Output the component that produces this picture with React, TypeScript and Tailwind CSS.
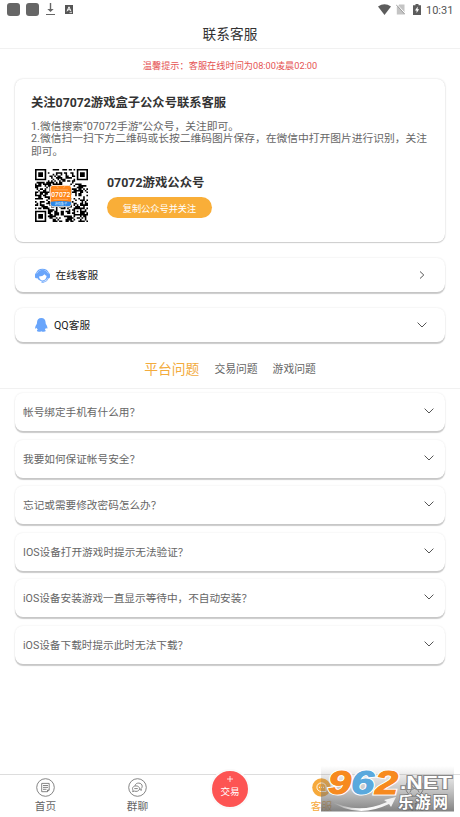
import { useState } from 'react';

const FINDERS = [[0, 0], [26, 0], [0, 26]];

// 33 x 33 module code, with the three corner marks and one alignment mark
const buildCode = () => {
	let seed = 7072;
	let d = "";
	const ring = (x: number, y: number, cx: number, cy: number) =>
		Math.max(Math.abs(x - cx), Math.abs(y - cy));
	for (let y = 0; y < 33; y++) {
		for (let x = 0; x < 33; x++) {
			seed = (seed * 1103515245 + 12345) % 2147483648;
			let dark = ((seed >> 12) & 7) < 4;
			for (const [fx, fy] of FINDERS) {
				const r = ring(x, y, fx + 3, fy + 3);
				if (r <= 4) dark = r === 3 || r <= 1;
			}
			const a = ring(x, y, 26, 26);
			if (a <= 2) dark = a !== 1;
			if (dark) d += `M${x} ${y}h1v1h-1z`;
		}
	}
	return d;
};

const QrCode = () => (
	<svg className="w-[53px] h-[53px]" viewBox="0 0 33 33">
		<path d={buildCode()} fill="#000" />
		<rect x="9.3" y="10" width="13.6" height="13.6" rx="2" fill="#fff" />
		<rect x="9.7" y="10.4" width="12.8" height="12.8" rx="1.8" fill="#ff8619" />
		<path d="M9.7 20.4Q16 19.4 22.5 20.4V21.4a1.8 1.8 0 0 1-1.8 1.8H11.5a1.8 1.8 0 0 1-1.8-1.8z" fill="#2b86e8" />
		<path d="M11.5 13h9M11.5 18.9h9M13.5 10.6l1 1.3M18.7 10.6l-1 1.3" stroke="#ffc48a" strokeWidth=".4" />
		<text x="16.1" y="17.7" fontSize="4.2" textAnchor="middle" fill="#fff" fontWeight="500">07072</text>
		<text x="16.1" y="22.6" fontSize="1.9" textAnchor="middle" fill="#d8ebff">游戏盒子</text>
	</svg>
);

const ChevronDown = () => (
	<svg className="w-[10px] h-[6px]" viewBox="0 0 10 6" fill="none" stroke="#555" strokeWidth="1">
		<path d="M.6 .6L5 5L9.4 .6" />
	</svg>
);

const StatusBar = () => (
	<div className="flex h-[18px] items-center justify-between pl-[7px] pr-[7px]">
		<div className="flex items-center">
			<span className="w-[13px] h-[13px] rounded-[3px] bg-[#666]" />
			<span className="w-[13px] h-[13px] rounded-[3px] bg-[#666] ml-[6px]" />
			<svg className="w-[9px] h-[12px] ml-[7px]" viewBox="0 0 9 12" fill="#666">
				<path d="M3.800 0h1.400v6h2.500L4.500 9 1.300 6h2.500zM0 11h9V12H0z" />
			</svg>
			<svg className="w-[8px] h-[9px] ml-[10px]" viewBox="0 0 8 9">
				<rect width="8" height="9" fill="#555" />
				<path d="M2 6.3L4 1.8L6 6.3M2.8 4.8h2.4" stroke="#fff" strokeWidth="1" fill="none" />
				<path d="M4.5 7.6h2.5" stroke="#fff" strokeWidth=".7" />
			</svg>
		</div>
		<div className="flex items-center">
			<svg className="w-[13px] h-[11px]" viewBox="0 0 13 11" fill="#5c5c5c">
				<path d="M0 2.6Q6.5-2.2 13 2.6L6.5 11z" />
			</svg>
			<svg className="w-[9px] h-[11px] ml-[5px]" viewBox="0 0 9 11">
				<path d="M3.2 .5H8.5V10.5H.8V3z" fill="#c4c4c4" />
				<path d="M.8 .2L9 9.200" stroke="#fff" strokeWidth="1" />
				<path d="M0 .6L9 10.4" stroke="#999" strokeWidth=".9" />
			</svg>
			<svg className="w-[8px] h-[11px] ml-[8px]" viewBox="0 0 8 11">
				<path d="M2.5 0h3v1.2H8V11H0V1.2h2.5z" fill="#5c5c5c" />
				<path d="M4.7 2.5L2 6.4h1.6v2.7L6.1 5.3H4.6z" fill="#fff" />
			</svg>
			<span className="ml-[5px] mt-[2px] w-[27px] text-[11px] leading-none text-[#555] whitespace-nowrap">10:31</span>
		</div>
	</div>
);

const OnlineIcon = () => (
	<svg className="w-[15px] h-[15px]" viewBox="0 0 15 15">
		<path d="M1.4 5.4A6.6 6.6 0 0 1 13.6 5.4" fill="none" stroke="#69a5fb" strokeWidth="1.100" />
		<circle cx="7.5" cy="7.5" r="5.8" fill="#69a5fb" />
		<path d="M4 8.600Q7.8 8.6 9.6 6.300Q10.2 7.6 11.600 8.100Q11.2 12.3 7.6 12.6Q4.6 12.3 4 8.600z" fill="#fff" />
		<rect x="0" y="5.200" width="3" height="5" rx="1.2" fill="#69a5fb" />
		<rect x="12" y="5.200" width="3" height="5" rx="1.2" fill="#69a5fb" />
		<path d="M13.6 9.8Q12.4 13.6 8.6 14.2" fill="none" stroke="#69a5fb" strokeWidth=".8" />
		<ellipse cx="7.6" cy="14" rx="1.5" ry=".8" fill="#69a5fb" />
	</svg>
);

const QQIcon = () => (
	<svg className="w-[13px] h-[14px]" viewBox="0 0 13 14" fill="#69a5fb">
		<path d="M6.3 0C3.5 0 2 2 2 4.5L1.800 6C.7 7.3 0 9 .2 10.3c.1.7.7.4 1.400-.5.2.8.6 1.4 1.2 2-.9.4-1.1 1-.7 1.5.6.7 3.300.6 4.200-.1.9.7 3.600.8 4.200.1.4-.5.2-1.1-.7-1.5.6-.6 1-1.200 1.2-2 .7.9 1.3 1.200 1.4.5.2-1.3-.5-3-1.600-4.300l-.2-1.5C10.600 2 9.1 0 6.3 0z" />
	</svg>
);

const HomeIcon = () => (
	<svg className="w-[19px] h-[19px]" viewBox="0 0 19 19" fill="none" stroke="#777" strokeWidth=".9">
		<circle cx="9.5" cy="9.5" r="8.8" />
		<path d="M5.7 5.4H13.2V12L11.5 13.7H5.7zM7 7.5h5M7 9.4h5M7 11.3h3.5M13.2 12h-1.7v1.7" />
	</svg>
);

const ChatIcon = () => (
	<svg className="w-[19px] h-[19px]" viewBox="0 0 19 19" fill="none" stroke="#777" strokeWidth=".9">
		<circle cx="9.5" cy="9.5" r="8.8" />
		<path d="M7 7.7C7.4 5.8 9 5 10.8 5.1c2 .1 3.4 1.4 3.4 3.1 0 1-.4 1.8-1.2 2.3l.4 1.8-2-.9" />
		<path d="M8 7.9c2 0 3.5 1.1 3.5 2.7s-1.5 2.8-3.5 2.8c-.6 0-1-.1-1.5-.3l-1.9.5.5-1.5c-.4-.4-.6-.9-.6-1.5 0-1.600 1.500-2.700 3.500-2.700z" />
		<path d="M6.300 10.600h3.500" />
	</svg>
);

const ServiceIcon = () => (
	<svg className="w-[19px] h-[19px]" viewBox="0 0 19 19">
		<circle cx="9.5" cy="9.5" r="9.3" fill="#f6a93b" />
		<path d="M9.500 4.900c2.700 0 4.600 1.800 4.600 4.300v4.300H9.500c-2.700 0-4.600-1.800-4.600-4.300s1.900-4.300 4.600-4.300z" fill="none" stroke="#fff" strokeWidth=".9" />
		<path d="M7 9.300h1M9 9.300h1M11 9.300h1" stroke="#fff" strokeWidth="1" />
	</svg>
);

const MeIcon = () => (
	<svg className="w-[19px] h-[19px]" viewBox="0 0 19 19" fill="none" stroke="#777" strokeWidth=".9">
		<circle cx="9.5" cy="9.5" r="8.8" />
		<circle cx="9.5" cy="7.500" r="2.600" />
		<path d="M4.800 14.500q1-4 4.700-4t4.700 4" />
	</svg>
);

const Watermark = () => (
	<svg className="absolute left-[321px] top-[-9px] w-[134px] h-[46px] overflow-visible" viewBox="0 0 134 46">
		<defs>
			<linearGradient id="shade" x1="0" y1="0" x2="0" y2="1">
				<stop offset="0" stopColor="#777" stopOpacity="0" />
				<stop offset=".5" stopColor="#777" stopOpacity=".4" />
				<stop offset="1" stopColor="#666" stopOpacity=".82" />
			</linearGradient>
			<linearGradient id="swoosh" x1="0" y1="0" x2="1" y2="0">
				<stop offset="0" stopColor="#888" />
				<stop offset=".5" stopColor="#fff" />
				<stop offset="1" stopColor="#eee" />
			</linearGradient>
		</defs>
		<rect width="133" height="45.500" fill="url(#shade)" />
		<g fontFamily="'Liberation Sans', sans-serif" fontWeight="700" paintOrder="stroke">
			<g fontSize="33" fontStyle="italic" stroke="#fff" strokeWidth="3">
				<text transform="translate(7 28) scale(1.26 1)" fill="#f78a1f">9</text>
				<text transform="translate(30 28) scale(1.26 1)" fill="#5aa9dd">6</text>
				<text transform="translate(54 28) scale(1.26 1)" fill="#f78a1f">2</text>
			</g>
			<g fontSize="33" fontStyle="italic" strokeWidth="1">
				<text transform="translate(7 28) scale(1.26 1)" fill="#f78a1f" stroke="#f78a1f" aria-hidden="true">9</text>
				<text transform="translate(30 28) scale(1.26 1)" fill="#5aa9dd" stroke="#5aa9dd" aria-hidden="true">6</text>
				<text transform="translate(54 28) scale(1.26 1)" fill="#f78a1f" stroke="#f78a1f" aria-hidden="true">2</text>
			</g>
			<text x="79" y="22.500" fontSize="18" fill="#fff" stroke="#888" strokeWidth="2" textLength="52" lengthAdjust="spacingAndGlyphs">.NET</text>
		</g>
		<path d="M6 33Q35 50 66 36L63 34L75 31L70 41L68 38Q35 54 6 33z" fill="url(#swoosh)" />
		<text x="77" y="42" fontSize="15.500" fontWeight="700" fill="#fff" stroke="#777" strokeWidth="1.500" paintOrder="stroke" textLength="50">乐游网</text>
	</svg>
);

const tabs = ["平台问题", "交易问题", "游戏问题"];

const questions = [
	"帐号绑定手机有什么用？",
	"我要如何保证帐号安全？",
	"忘记或需要修改密码怎么办？",
	"IOS设备打开游戏时提示无法验证？",
	"iOS设备安装游戏一直显示等待中，不自动安装？",
	"iOS设备下载时提示此时无法下载？",
];

const App = () => {
	const [active, setActive] = useState(0);

	return (
		<div className="flex flex-col w-[460px] h-[817px] overflow-hidden bg-white text-[10.7px] text-[#666] font-[Roboto,'Noto_Sans_CJK_SC',sans-serif]">
			<StatusBar />
			<h1 className="h-[31px] shrink-0 border-b border-[#f1f1f1] text-center text-[13.7px] leading-[32px] text-[#333]">联系客服</h1>
			<p className="h-[30px] shrink-0 text-center text-[9.200px] leading-[34px] text-[#e55353]">温馨提示：客服在线时间为08:00凌晨02:00</p>

			<section className="mx-[15px] h-[163px] shrink-0 rounded-[8px] px-[16px] pt-[15px] shadow-[0_0_2px_rgba(0,0,0,0.18),0_1px_1px_rgba(0,0,0,0.16)]">
				<h2 className="text-[12.300px] leading-[19px] font-bold text-[#333]">关注07072游戏盒子公众号联系客服</h2>
				<p className="mt-[8px] mr-[-2px] text-[10.760px] leading-[12.400px]">
					1.微信搜索“07072手游”公众号，关注即可。<br />
					2.微信扫一扫下方二维码或长按二维码图片保存，在微信中打开图片进行识别，关注即可。
				</p>
				<div className="flex mt-[11px] pl-[4px]">
					<QrCode />
					<div className="ml-[19px] pt-[4px]">
						<h3 className="text-[12.400px] leading-[19px] font-bold text-[#333]">07072游戏公众号</h3>
						<button className="block mt-[5px] w-[105px] h-[21px] rounded-full bg-[#f9ae38] text-[9.200px] leading-[23px] text-white">复制公众号并关注</button>
					</div>
				</div>
			</section>

			<button className="flex items-center mx-[15px] mt-[16px] h-[34px] shrink-0 rounded-[8px] pl-[20px] pr-[20px] text-[#222] shadow-[0_0_2px_rgba(0,0,0,0.12),0_2px_1px_rgba(0,0,0,0.2)]">
				<OnlineIcon />
				<span className="ml-[5.500px] pt-[2px]">在线客服</span>
				<svg className="ml-auto w-[6px] h-[8px]" viewBox="0 0 6 8" fill="none" stroke="#555" strokeWidth="1">
					<path d="M1 .5L4.800 4L1 7.500" />
				</svg>
			</button>
			<button className="flex items-center mx-[15px] mt-[16px] h-[34px] shrink-0 rounded-[8px] pl-[20px] pr-[18px] text-[#222] shadow-[0_0_2px_rgba(0,0,0,0.12),0_2px_1px_rgba(0,0,0,0.2)]">
				<QQIcon />
				<span className="ml-[6px] mr-auto pt-[2px]">QQ客服</span>
				<ChevronDown />
			</button>

			<div className="flex h-[47px] shrink-0 items-center justify-center gap-[15px] border-b border-[#f1f1f1] pt-[8px]">
				{tabs.map((tab, i) => (
					<button key={tab} onClick={() => setActive(i)} className={i === active ? "text-[13.800px] text-[#f3ab3d]" : "pt-[2px] text-[10.800px]"}>
						{tab}
					</button>
				))}
			</div>

			<div className="flex flex-1 flex-col gap-[8.500px] px-[15px] pt-[4px]">
				{questions.map((q) => (
					<div key={q} className="flex h-[38px] shrink-0 items-center justify-between rounded-[8px] pl-[8px] pr-[11px] shadow-[0_0_2px_rgba(0,0,0,0.1),0_2px_1px_rgba(0,0,0,0.2)]">
						<span className="pt-[2px] text-[10.650px]">{q}</span>
						<span className="pb-[2px]"><ChevronDown /></span>
					</div>
				))}
			</div>

			<nav className="relative grid grid-cols-5 h-[43px] shrink-0 border-t border-[#ddd] leading-[16px]">
				<div className="flex flex-col items-center pt-[3px] pr-[1px]">
					<HomeIcon />
					<span className="mt-[2px]">首页</span>
				</div>
				<div className="flex flex-col items-center pt-[3px] pr-[1px]">
					<ChatIcon />
					<span className="mt-[2px]">群聊</span>
				</div>
				<div className="flex justify-center">
					<div className="flex flex-col items-center w-[40px] h-[40px] mt-[-6px] shrink-0 rounded-full border-2 border-[#fafafa] bg-[#fd5453] text-white">
						<svg className="w-[6px] h-[6px] mt-[5px]" viewBox="0 0 6 6" stroke="#fff" strokeWidth=".8">
							<path d="M3 0V6M0 3H6" />
						</svg>
						<span className="mt-[2px] text-[9.600px] leading-[16px]">交易</span>
					</div>
				</div>
				<div className="flex flex-col items-center pt-[3px] pr-[1px] text-[#f6a93b]">
					<ServiceIcon />
					<span className="mt-[2px]">客服</span>
				</div>
				<div className="flex flex-col items-center pt-[3px]">
					<MeIcon />
					<span className="mt-[2px]">我的</span>
				</div>
				<Watermark />
			</nav>
		</div>
	);
};

export default App;
